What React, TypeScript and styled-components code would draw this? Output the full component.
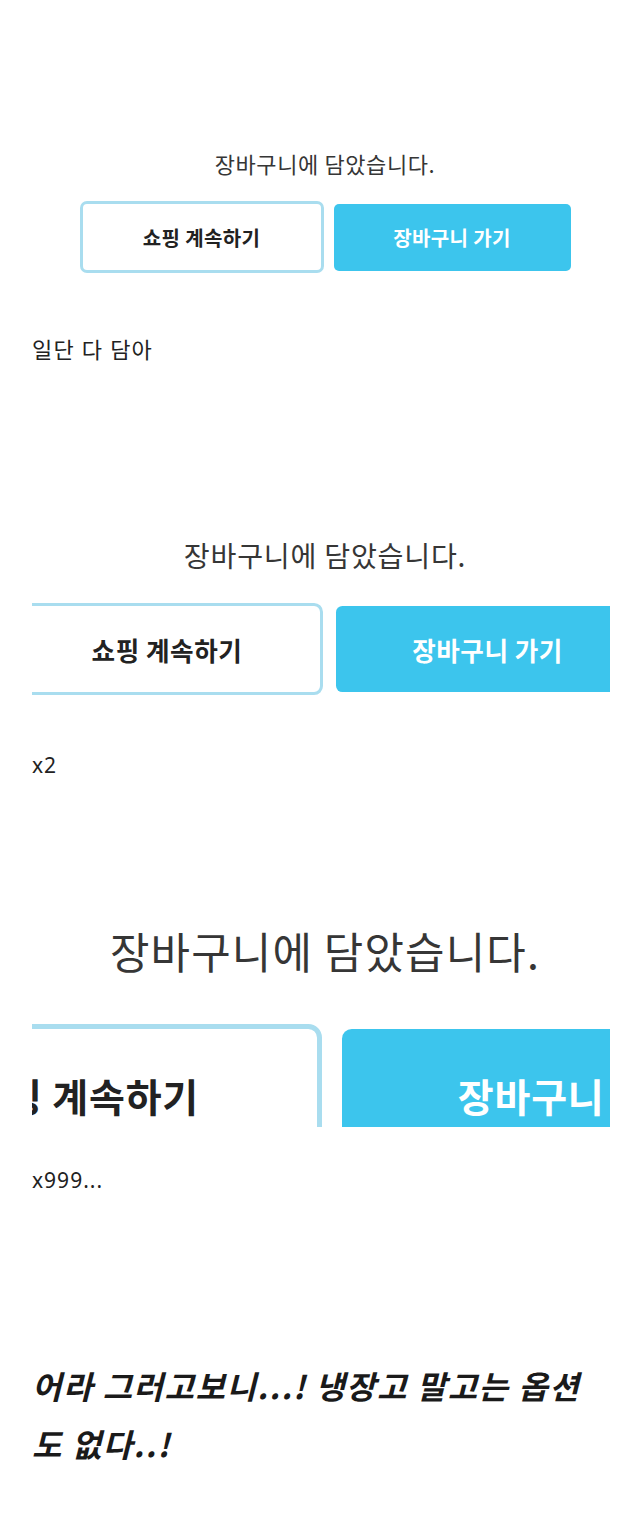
import React from "react";
import styled, { createGlobalStyle } from "styled-components";

const GlobalStyle = createGlobalStyle`
  html, body {
    margin: 0;
    padding: 0;
    background: #ffffff;
  }
  body {
    font-family: "Noto Sans", "Noto Sans CJK KR", sans-serif;
    color: #222222;
  }
`;

// one cart notice capture, each drawn at its own zoom level
const shots = [
  { scale: 1, gap: 120, height: 175, pad: 30 },
  { scale: 1.28, gap: 136, height: 216, pad: 38 },
  { scale: 1.95, gap: 100, height: 247, pad: 45 },
];

const App = () => {
  return (
    <>
      <GlobalStyle />
      <Post>
        <Shot $height={shots[0].height} $pad={shots[0].pad} $gap={shots[0].gap}>
          <CartNotice scale={shots[0].scale} />
        </Shot>
        <Caption $gap={39} $wide>일단 다 담아</Caption>

        <Shot $height={shots[1].height} $pad={shots[1].pad} $gap={shots[1].gap}>
          <CartNotice scale={shots[1].scale} />
        </Shot>
        <Caption $gap={34}>x2</Caption>

        <Shot $height={shots[2].height} $pad={shots[2].pad} $gap={shots[2].gap}>
          <CartNotice scale={shots[2].scale} />
        </Shot>
        <Caption $gap={38}>x999...</Caption>

        <Punchline>어라 그러고보니...! 냉장고 말고는 옵션도 없다..!</Punchline>
      </Post>
    </>
  );
};

const CartNotice = ({ scale }: { scale: number }) => (
  <Notice $s={scale}>
    <NoticeTitle $s={scale}>장바구니에 담았습니다.</NoticeTitle>
    <ButtonRow $s={scale}>
      <KeepShopping $s={scale}>쇼핑 계속하기</KeepShopping>
      <GoToCart $s={scale}>장바구니 가기</GoToCart>
    </ButtonRow>
  </Notice>
);

export default App;

const Post = styled.main`
  display: flex;
  flex-direction: column;
  padding: 0 30px 60px 32px;
`;

const Shot = styled.div<{ $height: number; $pad: number; $gap: number }>`
  display: flex;
  justify-content: center;
  align-items: flex-start;
  height: ${p => p.$height}px;
  padding-top: ${p => p.$pad}px;
  margin-top: ${p => p.$gap}px;
  box-sizing: border-box;
  overflow: hidden;
  background: #ffffff;
`;

const Notice = styled.div<{ $s: number }>`
  flex-shrink: 0;
  display: flex;
  flex-direction: column;
  align-items: center;
  margin-left: 8px;
  width: ${p => 491 * p.$s}px;
  font-family: "Noto Sans CJK KR", "Noto Sans", sans-serif;
`;

const NoticeTitle = styled.div<{ $s: number }>`
  font-size: ${p => 22 * p.$s}px;
  line-height: ${p => 26 * p.$s}px;
  color: #363636;
  letter-spacing: ${p => 0.6 * p.$s}px;
`;

const ButtonRow = styled.div<{ $s: number }>`
  display: flex;
  align-items: center;
  gap: ${p => 10 * p.$s}px;
  margin-top: ${p => 25 * p.$s}px;
`;

const BaseButton = styled.div<{ $s: number }>`
  display: flex;
  align-items: center;
  justify-content: center;
  box-sizing: border-box;
  font-size: ${p => 20 * p.$s}px;
  font-weight: 700;
  letter-spacing: ${p => 0.4 * p.$s}px;
`;

const KeepShopping = styled(BaseButton)`
  width: ${p => 244 * p.$s}px;
  height: ${p => 72 * p.$s}px;
  border: ${p => 3 * p.$s}px solid #a9ddef;
  border-radius: ${p => 7 * p.$s}px;
  background: #ffffff;
  color: #222222;
`;

const GoToCart = styled(BaseButton)`
  width: ${p => 237 * p.$s}px;
  height: ${p => 67 * p.$s}px;
  border-radius: ${p => 5 * p.$s}px;
  background: #3cc5ed;
  color: #ffffff;
`;

const Caption = styled.p<{ $gap: number; $wide?: boolean }>`
  margin: ${p => p.$gap}px 0 0;
  font-family: "Noto Sans", "Noto Sans CJK KR", sans-serif;
  font-size: ${p => (p.$wide ? 22 : 21)}px;
  line-height: 30px;
  letter-spacing: ${p => (p.$wide ? 1.2 : 1)}px;
  color: #222222;
`;

const Punchline = styled.p`
  margin: 161px 0 0;
  font-family: "Noto Sans CJK KR", "Noto Sans", sans-serif;
  font-size: 32px;
  font-weight: 700;
  font-style: italic;
  letter-spacing: 1.5px;
  line-height: 58px;
  color: #1a1a1a;
`;
